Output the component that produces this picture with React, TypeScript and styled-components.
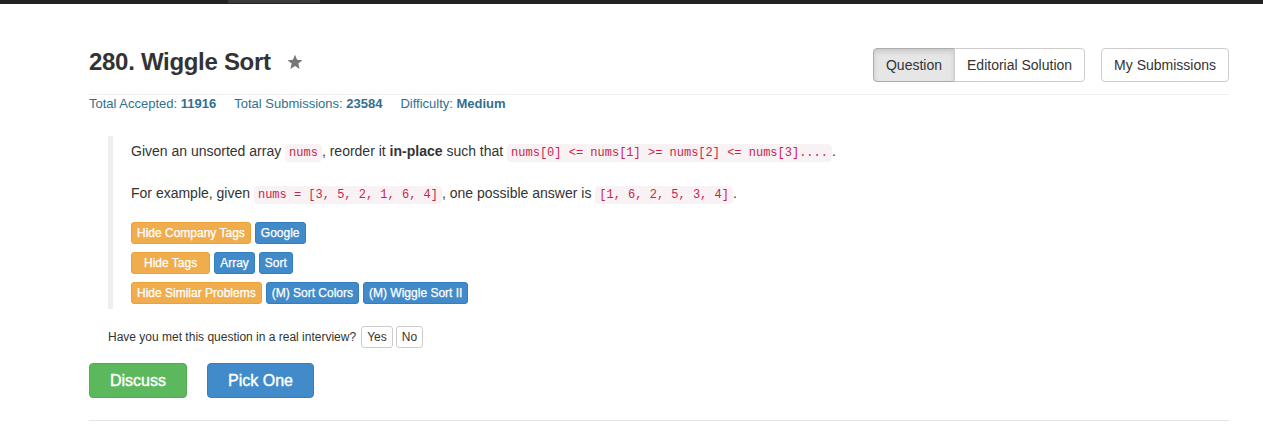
import React from "react";
import styled, { createGlobalStyle, css } from "styled-components";

const GlobalStyle = createGlobalStyle`
  body {
    margin: 0;
    background: #fff;
    color: #333;
    font-family: "Liberation Sans", Arial, Helvetica, sans-serif;
  }
`;

const TopBar = styled.div`
  height: 4px;
  background: #222;
  display: flex;
  align-items: flex-start;
`;

const NavTab = styled.div`
  margin-left: 228px;
  width: 92px;
  height: 3px;
  background: #3a3a3a;
`;

const Page = styled.div`
  padding: 0 34px 0 89px;
`;

const Header = styled.div`
  display: flex;
  justify-content: space-between;
  align-items: flex-start;
  padding-top: 44px;
  padding-bottom: 12px;
  border-bottom: 1px solid #eee;
`;

const TitleWrap = styled.div`
  display: flex;
  align-items: center;
  gap: 16px;
  padding-top: 1px;
`;

const Title = styled.h1`
  margin: 0;
  font-size: 24px;
  line-height: 26px;
  font-weight: 700;
  letter-spacing: -0.3px;
  color: #333;
`;

const Actions = styled.div`
  display: flex;
  gap: 16px;
`;

const BtnGroup = styled.div`
  display: flex;
`;

const NavButton = styled.button<{ $active?: boolean; $pos?: "first" | "last" | "solo" }>`
  font-family: inherit;
  font-size: 14px;
  line-height: 20px;
  padding: 6px 12px;
  color: #333;
  background: #fff;
  border: 1px solid #ccc;
  border-radius: 4px;
  cursor: pointer;
  ${(p) =>
    p.$pos === "first" &&
    css`
      border-top-right-radius: 0;
      border-bottom-right-radius: 0;
    `}
  ${(p) =>
    p.$pos === "last" &&
    css`
      border-top-left-radius: 0;
      border-bottom-left-radius: 0;
      margin-left: -1px;
    `}
  ${(p) =>
    p.$active &&
    css`
      background: #e6e6e6;
      border-color: #adadad;
      box-shadow: inset 0 3px 5px rgba(0, 0, 0, 0.125);
    `}
`;

const Stats = styled.div`
  display: flex;
  gap: 18px;
  font-size: 13px;
  line-height: 18px;
  color: #31708f;
`;

const Quote = styled.blockquote`
  margin: 23px 0 0 19px;
  padding: 0 0 5px 18px;
  border-left: 5px solid #eee;
`;

const Para = styled.p`
  margin: 0 0 10px;
  font-size: 14px;
  line-height: 30px;
  color: #333;
`;

const Code = styled.code`
  font-family: "Liberation Mono", "DejaVu Sans Mono", monospace;
  font-size: 12px;
  padding: 2px 4px;
  color: #c7254e;
  background: #f9f2f4;
  border-radius: 4px;
  white-space: pre;
`;

const TagRows = styled.div`
  display: flex;
  flex-direction: column;
  gap: 8px;
  padding-top: 2px;
`;

const TagRow = styled.div`
  display: flex;
  gap: 4px;
`;

const Tag = styled.span<{ $kind: "warning" | "primary"; $wide?: boolean }>`
  display: inline-block;
  font-size: 12px;
  line-height: 18px;
  padding: 1px ${(p) => (p.$wide ? "12px" : "5px")};
  border-radius: 3px;
  color: #fff;
  -webkit-text-stroke: 0.25px #fff;
  border: 1px solid
    ${(p) => (p.$kind === "warning" ? "#eea236" : "#357ebd")};
  background: ${(p) => (p.$kind === "warning" ? "#f0ad4e" : "#428bca")};
`;

const InterviewRow = styled.div`
  display: flex;
  align-items: center;
  margin: 17px 0 0 19px;
  font-size: 12px;
  color: #333;
`;

const InterviewText = styled.span`
  margin-right: 5px;
`;

const SmallBtn = styled.button`
  font-family: inherit;
  font-size: 12px;
  line-height: 18px;
  padding: 1px 5px;
  margin-right: 3px;
  background: #fff;
  color: #333;
  border: 1px solid #ccc;
  border-radius: 3px;
`;

const BigActions = styled.div`
  display: flex;
  gap: 20px;
  margin-top: 15px;
`;

const BigBtn = styled.button<{ $kind: "success" | "primary" }>`
  font-family: inherit;
  font-size: 16px;
  line-height: 21px;
  padding: 6px 20px;
  color: #fff;
  -webkit-text-stroke: 0.4px #fff;
  border-radius: 4px;
  border: 1px solid
    ${(p) => (p.$kind === "success" ? "#4cae4c" : "#357ebd")};
  background: ${(p) => (p.$kind === "success" ? "#5cb85c" : "#428bca")};
`;

const BottomRule = styled.hr`
  margin: 22px 0 0;
  border: 0;
  border-top: 1px solid #e5e5e5;
`;

const StarIcon = () => (
  <svg width="16" height="16" viewBox="0 0 24 24" aria-hidden="true">
    <polygon
      fill="#777"
      points="12,1 15.1,8.6 23.3,9.2 17,14.4 19,22.5 12,18.1 5,22.5 7,14.4 0.7,9.2 8.9,8.6"
    />
  </svg>
);

export default function App() {
  return (
    <>
      <GlobalStyle />
      <TopBar>
        <NavTab />
      </TopBar>
      <Page>
        <Header>
          <TitleWrap>
            <Title>280. Wiggle Sort</Title>
            <StarIcon />
          </TitleWrap>
          <Actions>
            <BtnGroup>
              <NavButton $active $pos="first">
                Question
              </NavButton>
              <NavButton $pos="last">Editorial Solution</NavButton>
            </BtnGroup>
            <NavButton $pos="solo">My Submissions</NavButton>
          </Actions>
        </Header>
        <Stats>
          <span>
            Total Accepted: <b>11916</b>
          </span>
          <span>
            Total Submissions: <b>23584</b>
          </span>
          <span>
            Difficulty: <b>Medium</b>
          </span>
        </Stats>
        <Quote>
          <Para>
            Given an unsorted array <Code>nums</Code>, reorder it{" "}
            <b>in-place</b> such that{" "}
            <Code>nums[0] &lt;= nums[1] &gt;= nums[2] &lt;= nums[3]....</Code>.
          </Para>
          <Para>
            For example, given <Code>nums = [3, 5, 2, 1, 6, 4]</Code>, one
            possible answer is <Code>[1, 6, 2, 5, 3, 4]</Code>.
          </Para>
          <TagRows>
            <TagRow>
              <Tag $kind="warning">Hide Company Tags</Tag>
              <Tag $kind="primary">Google</Tag>
            </TagRow>
            <TagRow>
              <Tag $kind="warning" $wide>
                Hide Tags
              </Tag>
              <Tag $kind="primary">Array</Tag>
              <Tag $kind="primary">Sort</Tag>
            </TagRow>
            <TagRow>
              <Tag $kind="warning">Hide Similar Problems</Tag>
              <Tag $kind="primary">(M) Sort Colors</Tag>
              <Tag $kind="primary">(M) Wiggle Sort II</Tag>
            </TagRow>
          </TagRows>
        </Quote>
        <InterviewRow>
          <InterviewText>Have you met this question in a real interview?</InterviewText>
          <SmallBtn>Yes</SmallBtn>
          <SmallBtn>No</SmallBtn>
        </InterviewRow>
        <BigActions>
          <BigBtn $kind="success">Discuss</BigBtn>
          <BigBtn $kind="primary">Pick One</BigBtn>
        </BigActions>
        <BottomRule />
      </Page>
    </>
  );
}
